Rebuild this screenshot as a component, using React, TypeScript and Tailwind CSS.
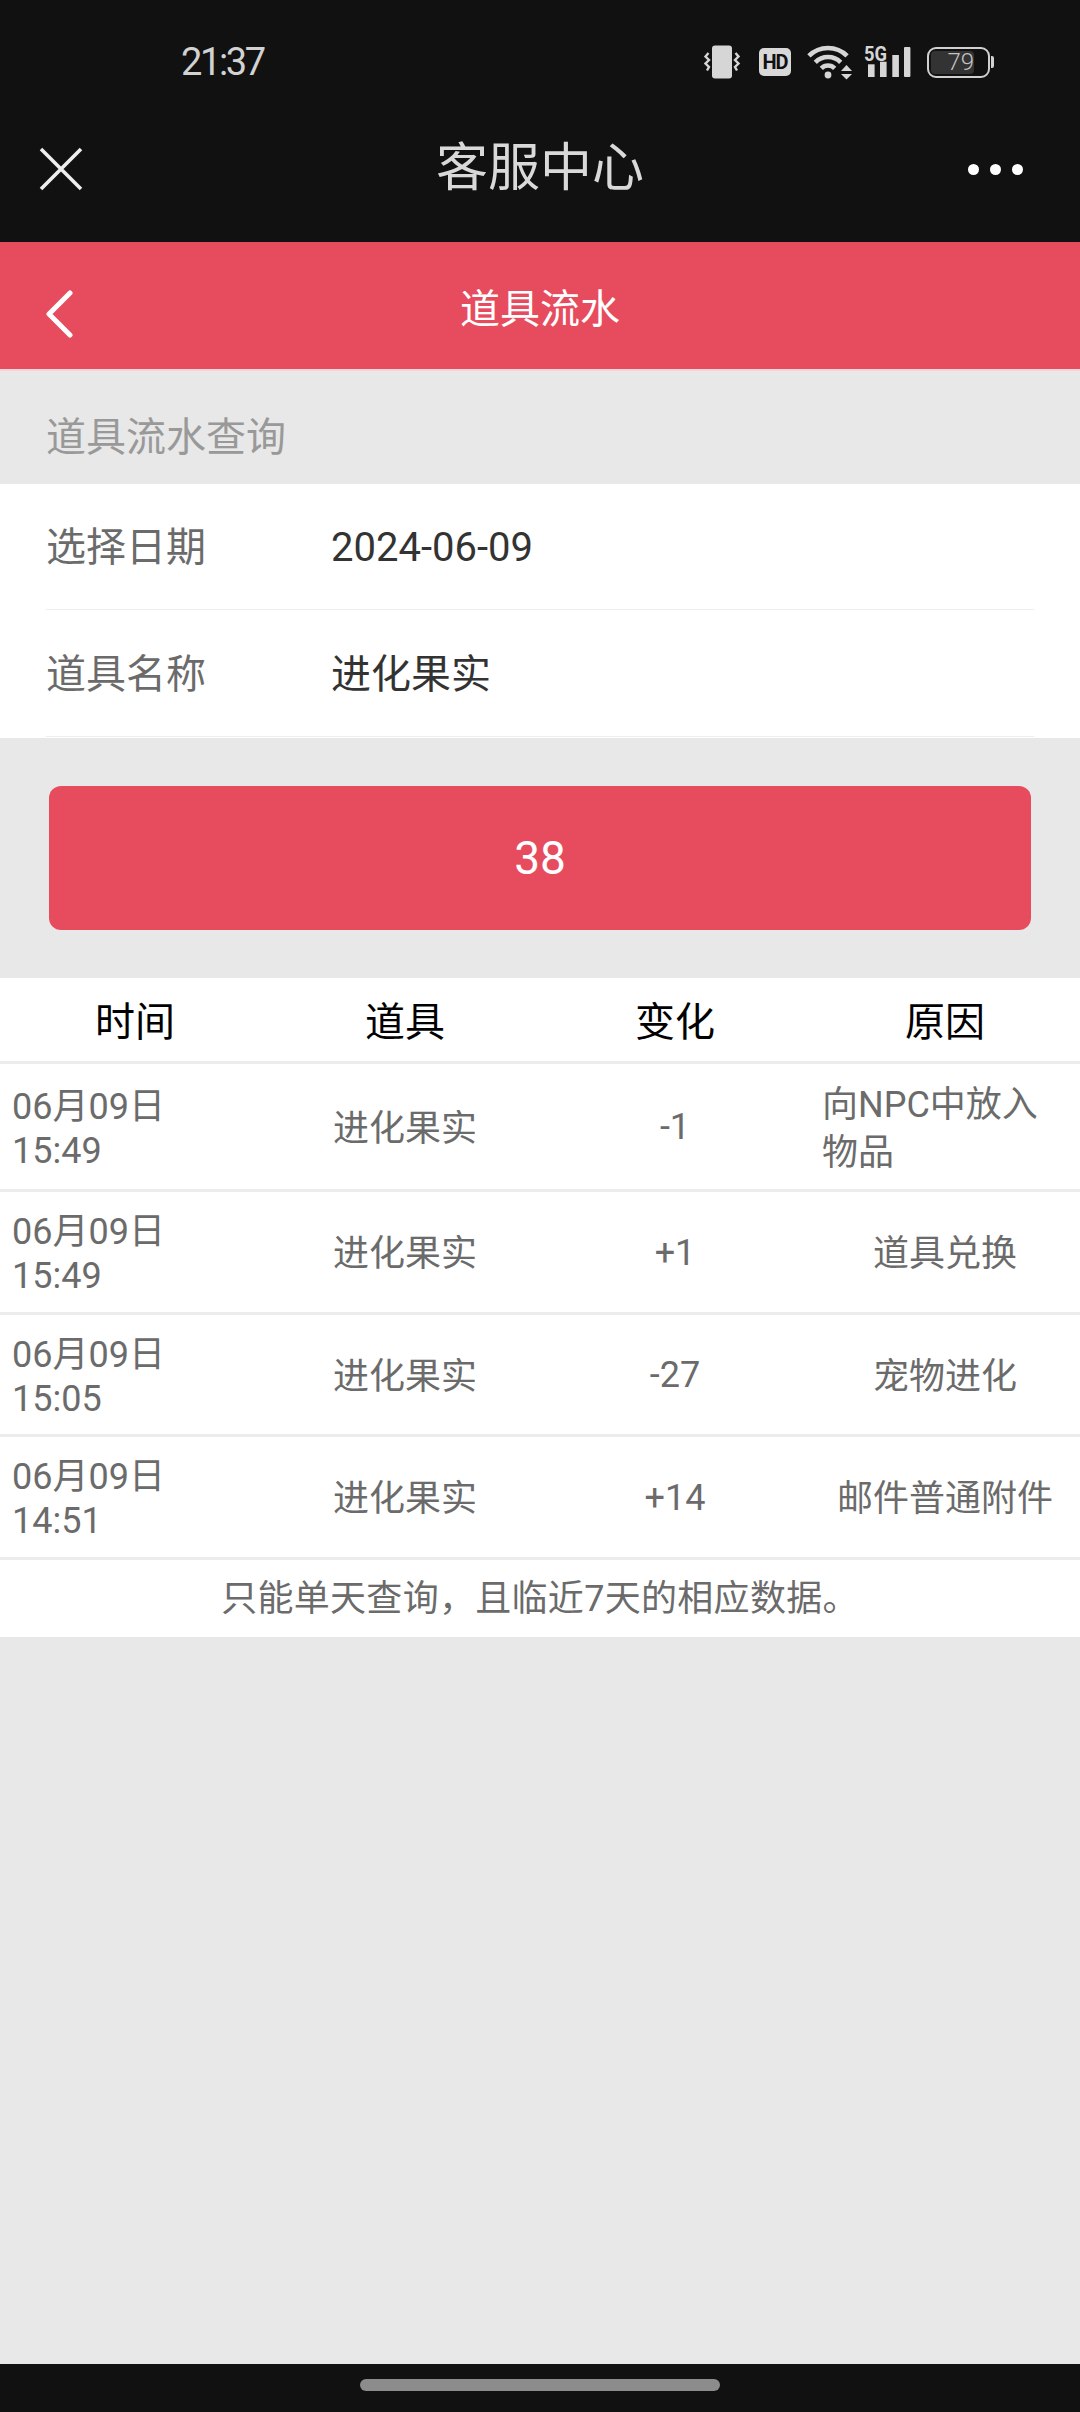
const records = [
  { time: '06月09日 15:49', item: '进化果实', change: '-1', reason: '向NPC中放入物品', height: 'h-[128px]' },
  { time: '06月09日 15:49', item: '进化果实', change: '+1', reason: '道具兑换', height: 'h-[123px]' },
  { time: '06月09日 15:05', item: '进化果实', change: '-27', reason: '宠物进化', height: 'h-[122px]' },
  { time: '06月09日 14:51', item: '进化果实', change: '+14', reason: '邮件普通附件', height: 'h-[123px]' },
];

function StatusIcons() {
  return (
    <div className="flex items-center pr-[86px]">
      <svg width="37" height="34" viewBox="0 0 37 34" fill="none">
        <rect x="8" y="0.5" width="20" height="33" rx="3" fill="#d6d6d6" />
        <path d="M4.5 8 L1.5 11.5 L5 15 L1.5 18.5 L5 22 L3 25.5" stroke="#d6d6d6" strokeWidth="2.4" />
        <path d="M31.5 8 L34.5 11.5 L31 15 L34.5 18.5 L31 22 L33 25.5" stroke="#d6d6d6" strokeWidth="2.4" />
      </svg>
      <div className="ml-[18px] flex h-[28px] w-[32px] items-center justify-center rounded-[5px] bg-[#d8d8d8] text-[20px] leading-none font-bold tracking-[-1px] text-[#111111]">
        HD
      </div>
      <svg className="ml-[15px]" width="47" height="36" viewBox="0 0 47 36" fill="none">
        <path d="M2.9 11.9 A27 27 0 0 1 41.1 11.9" stroke="#d6d6d6" strokeWidth="4.6" />
        <path d="M9.3 18.3 A18 18 0 0 1 34.7 18.3" stroke="#d6d6d6" strokeWidth="4.6" />
        <path d="M15.3 24.3 A9.5 9.5 0 0 1 28.7 24.3" stroke="#d6d6d6" strokeWidth="4.6" />
        <circle cx="22" cy="31" r="3.4" fill="#d6d6d6" />
        <path d="M35 27 L40.5 21 L46 27 Z" fill="#d6d6d6" />
        <path d="M35 30 L46 30 L40.5 35.5 Z" fill="#d6d6d6" />
      </svg>
      <svg className="mb-[6px] ml-[11px]" width="47" height="39" viewBox="0 -5 47 39" fill="none">
        <text x="0" y="15.5" fontSize="20" fontWeight="700" fill="#d6d6d6" textLength="23" lengthAdjust="spacingAndGlyphs">5G</text>
        <rect x="4" y="19.3" width="6.6" height="12.7" fill="#d6d6d6" />
        <rect x="16" y="16.7" width="6.6" height="15.3" fill="#d6d6d6" />
        <rect x="28.3" y="10" width="6.6" height="22" fill="#d6d6d6" />
        <rect x="40" y="2" width="6.4" height="30" rx="1" fill="#d6d6d6" />
      </svg>
      <div className="ml-[16px] flex items-center">
        <div className="h-[31px] w-[63px] rounded-[9px] border-2 border-[#d0d0d0] p-[2px]">
          <div className="flex h-full w-[43px] items-center justify-end rounded-[4px] bg-[#333333] text-[24px] leading-none font-light text-[#c4c4c4]">
            79
          </div>
        </div>
        <div className="ml-[1px] h-[12px] w-[3px] rounded-r-[2px] bg-[#d0d0d0]" />
      </div>
    </div>
  );
}

export default function App() {
  return (
    <div className="flex h-[2412px] w-[1080px] flex-col overflow-hidden bg-[#e8e8e8] font-[Roboto,'Noto_Sans_CJK_SC',sans-serif]">
      {/* system bar + webview nav */}
      <div className="bg-[#111111]">
        <div className="flex h-[96px] items-center justify-between pt-[28px] pl-[181px]">
          <span className="text-[38px] leading-none tracking-[-2.4px] text-[#d2d2d2]">21:37</span>
          <StatusIcons />
        </div>
        <div className="flex h-[146px] items-center justify-between">
          <div className="w-[120px] pl-[38px]">
            <svg width="46" height="46" viewBox="0 0 46 46" fill="none">
              <path d="M3 3 L43 43 M43 3 L3 43" stroke="#eeeeee" strokeWidth="3.6" />
            </svg>
          </div>
          <span className="text-[52px] leading-none text-[#d9d9d9]">客服中心</span>
          <div className="flex w-[120px] justify-end gap-[11px] pr-[57px]">
            <span className="h-[11px] w-[11px] shrink-0 rounded-full bg-white" />
            <span className="h-[11px] w-[11px] shrink-0 rounded-full bg-white" />
            <span className="h-[11px] w-[11px] shrink-0 rounded-full bg-white" />
          </div>
        </div>
      </div>

      {/* page header */}
      <div className="flex h-[129px] items-center justify-between border-b-2 border-[#f8d3d8] bg-[#e74c5e]">
        <div className="w-[120px] pt-[16px] pl-[44px]">
          <svg width="30" height="48" viewBox="0 0 30 48" fill="none">
            <path d="M26 3 L5 24 L26 45" stroke="#ffffff" strokeWidth="5" strokeLinecap="round" strokeLinejoin="round" />
          </svg>
        </div>
        <span className="pt-[9px] text-[40px] leading-none text-white">道具流水</span>
        <div className="w-[120px]" />
      </div>

      <div className="flex h-[113px] items-center pt-[21px] pl-[46px] text-[40px] leading-none text-[#999999]">
        道具流水查询
      </div>

      {/* query form */}
      <div className="bg-white pb-[1px] text-[40px] leading-none">
        <div className="mx-[46px] flex h-[126px] items-center border-b border-[#eeeeee] pt-[3px]">
          <span className="w-[285px] text-[#6b6b6b]">选择日期</span>
          <span className="text-[#333333]">2024-06-09</span>
        </div>
        <div className="mx-[46px] flex h-[127px] items-center border-b border-[#eeeeee] pt-[4px]">
          <span className="w-[285px] text-[#6b6b6b]">道具名称</span>
          <span className="text-[#333333]">进化果实</span>
        </div>
      </div>

      <div className="px-[49px] py-[48px]">
        <button className="flex h-[144px] w-full items-center justify-center rounded-[12px] bg-[#e74c5e] text-[46px] leading-none text-white">
          38
        </button>
      </div>

      {/* results */}
      <div className="bg-white">
        <div className="grid h-[86px] grid-cols-4 items-center border-b-[3px] border-[#ececec] pt-[6px] text-center text-[40px] leading-none text-black">
          <span>时间</span>
          <span>道具</span>
          <span>变化</span>
          <span>原因</span>
        </div>
        {records.map((row, idx) => (
          <div
            key={idx}
            className={`grid grid-cols-4 items-center border-b-[3px] border-[#ececec] text-[36px] text-[#6b6b6b] ${row.height}`}
          >
            <div className="flex justify-center px-[12px] pt-[4px] leading-[44px]">
              <div>{row.time}</div>
            </div>
            <div className="pt-[4px] text-center leading-[44px]">{row.item}</div>
            <div className="pt-[1px] text-center leading-[44px]">{row.change}</div>
            <div className="flex justify-center px-[12px] pt-[4px] leading-[48px]">
              <div>{row.reason}</div>
            </div>
          </div>
        ))}
        <div className="flex h-[77px] items-center justify-center pt-[1px] text-[36px] leading-none tracking-[0.3px] text-[#6b6b6b]">
          只能单天查询，且临近7天的相应数据。
        </div>
      </div>

      <div className="flex-1" />

      <div className="flex h-[48px] items-center justify-center bg-[#111111] pb-[6px]">
        <div className="h-[12px] w-[360px] rounded-full bg-[#8c8c8c]" />
      </div>
    </div>
  );
}
